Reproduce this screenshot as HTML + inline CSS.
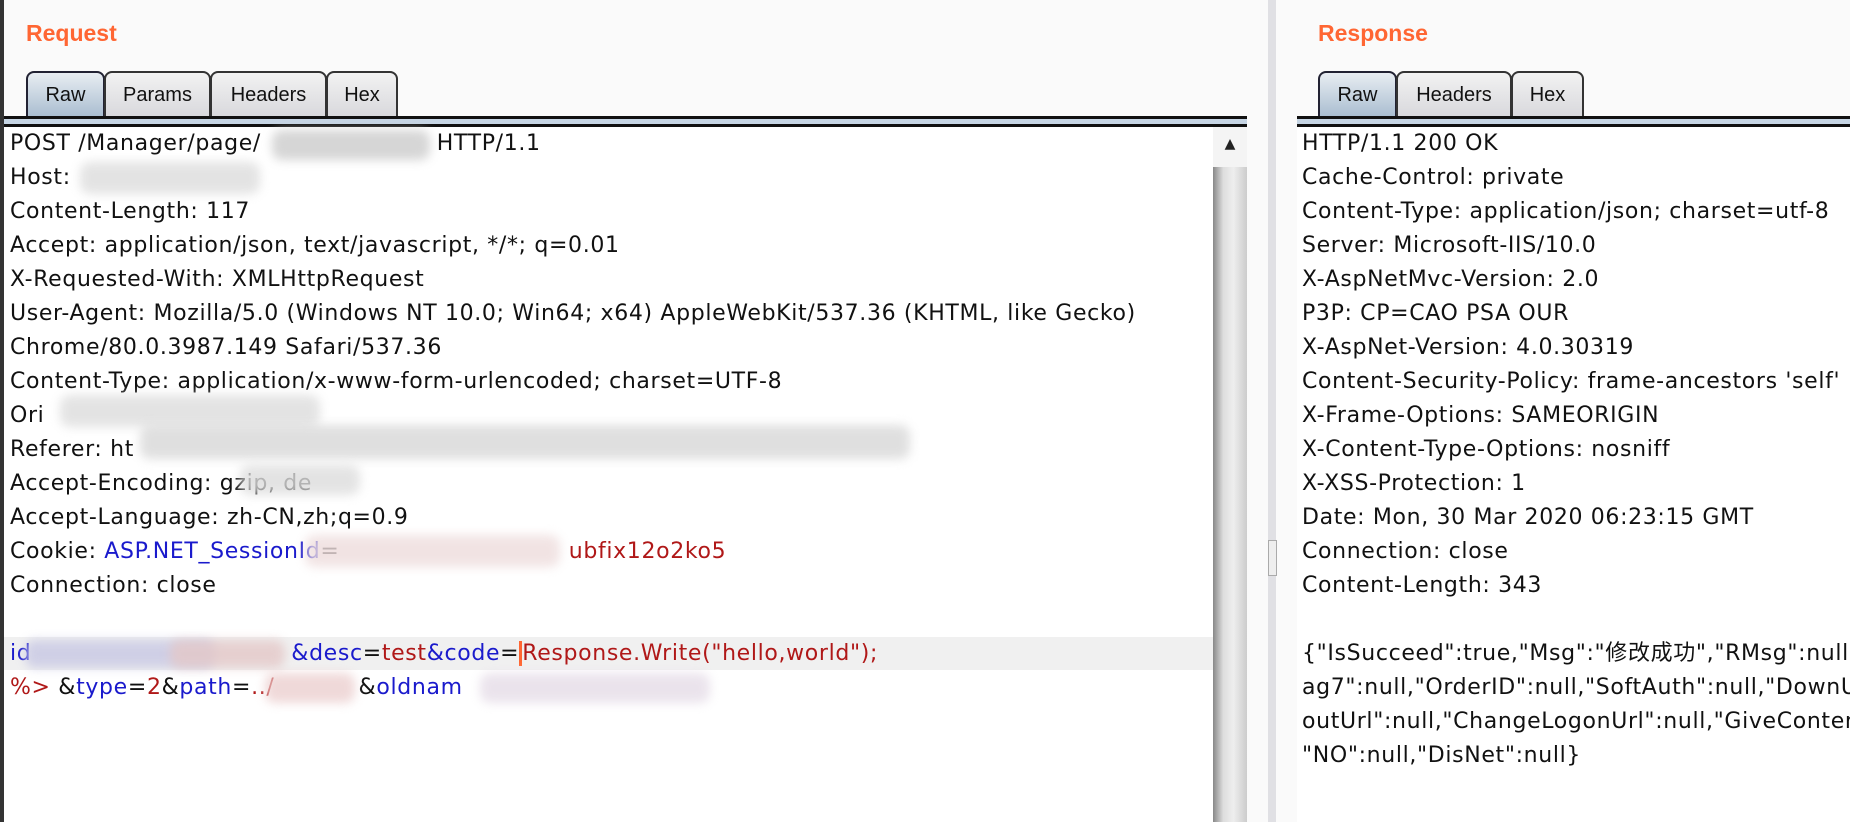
<!DOCTYPE html>
<html><head><meta charset="utf-8"><style>
*{margin:0;padding:0;box-sizing:border-box}
body{width:1850px;height:822px;background:#fafafa;position:relative;overflow:hidden;font-family:"DejaVu Sans","Liberation Sans","Noto Sans CJK SC",sans-serif}
.edge{position:absolute;left:0;top:0;width:4px;height:822px;background:#333}
.title{position:absolute;top:20px;font:bold 23px "Liberation Sans",sans-serif;color:#ff6633}
.tabs{position:absolute;top:71px;height:46px}
.tab{position:absolute;top:0;height:46px;border:2px solid #333;border-bottom:none;border-radius:8px 8px 0 0;background:linear-gradient(#f2f2f2,#d8d8dc);font:20px "Liberation Sans",sans-serif;color:#111;text-align:center;line-height:44px}
.tab.sel{background:linear-gradient(#e8edf2,#a9bdd0);border-color:#223}
.bar{position:absolute;top:116px;height:11px;background:#c6d5e4;border-top:3px solid #111;border-bottom:3px solid #111}
.panel{position:absolute;top:127px;bottom:0;background:#fff}
.txt{position:absolute;font-size:22px;letter-spacing:0.65px;line-height:34px;white-space:pre;color:#111}
.b{color:#1a1acc}.r{color:#b01818}
.blur{position:absolute;filter:blur(5px);border-radius:10px;opacity:.8}
</style></head><body>
<div class="edge"></div>
<div class="title" style="left:26px">Request</div>
<div class="tabs" style="left:26px">
<div class="tab sel" style="left:0;width:79px">Raw</div>
<div class="tab" style="left:78px;width:107px">Params</div>
<div class="tab" style="left:184px;width:117px">Headers</div>
<div class="tab" style="left:300px;width:72px">Hex</div>
</div>
<div class="bar" style="left:4px;width:1243px"></div>
<div class="panel" style="left:4px;width:1209px"></div>
<div style="position:absolute;left:4px;top:637px;width:1209px;height:33px;background:#f0f0f0"></div>
<div style="position:absolute;left:1213px;top:127px;width:34px;height:695px;background:linear-gradient(90deg,#888,#ddd 30%,#eee 60%,#ccc)"></div>
<div style="position:absolute;left:1213px;top:127px;width:34px;height:40px;background:#f4f4f4;font-size:14px;text-align:center;line-height:34px;color:#222">▲</div>
<div style="position:absolute;left:1268px;top:0;width:8px;height:822px;background:#e0e0e4"></div>
<div style="position:absolute;left:1268px;top:540px;width:9px;height:36px;border:1px solid #aaa;background:#eee"></div>
<div class="txt" style="left:10px;top:127px">POST /Manager/page/                       HTTP/1.1
Host: 
Content-Length: 117
Accept: application/json, text/javascript, */*; q=0.01
X-Requested-With: XMLHttpRequest
User-Agent: Mozilla/5.0 (Windows NT 10.0; Win64; x64) AppleWebKit/537.36 (KHTML, like Gecko)
Chrome/80.0.3987.149 Safari/537.36
Content-Type: application/x-www-form-urlencoded; charset=UTF-8
Ori
Referer: ht
Accept-Encoding: gzip, de
Accept-Language: zh-CN,zh;q=0.9
Cookie: <span class="b">ASP.NET_SessionId</span>=<span class="r">                              ubfix12o2ko5</span>
Connection: close

<span class="b">id</span>                                  <span class="b">&amp;desc</span>=<span class="r">test</span><span class="b">&amp;code</span>=<span style="border-left:3px solid #ff6633" class="r">Response.Write("hello,world");</span>
<span class="r">%&gt;</span> &amp;<span class="b">type</span>=<span class="r">2</span>&amp;<span class="b">path</span>=<span class="r">../</span>           &amp;<span class="b">oldnam</span></div>
<div class="blur" style="left:272px;top:130px;width:158px;height:30px;background:#ccc"></div>
<div class="blur" style="left:80px;top:162px;width:180px;height:32px;background:#ddd"></div>
<div class="blur" style="left:60px;top:395px;width:260px;height:32px;background:#ddd"></div>
<div class="blur" style="left:140px;top:425px;width:770px;height:34px;background:#d8d8d8"></div>
<div class="blur" style="left:240px;top:465px;width:120px;height:30px;background:#ddd"></div>
<div class="blur" style="left:305px;top:535px;width:255px;height:32px;background:#eedddd"></div>
<div class="blur" style="left:25px;top:640px;width:190px;height:28px;background:#c8c8e4"></div>
<div class="blur" style="left:170px;top:640px;width:115px;height:28px;background:#e4c8c8"></div>
<div class="blur" style="left:265px;top:673px;width:90px;height:30px;background:#ecd0d0"></div>
<div class="blur" style="left:480px;top:673px;width:230px;height:30px;background:#e6dde8"></div>
<div class="title" style="left:1318px">Response</div>
<div class="tabs" style="left:1318px">
<div class="tab sel" style="left:0;width:79px">Raw</div>
<div class="tab" style="left:78px;width:116px">Headers</div>
<div class="tab" style="left:193px;width:73px">Hex</div>
</div>
<div class="bar" style="left:1297px;width:553px"></div>
<div class="panel" style="left:1297px;width:553px"></div>
<div class="txt" style="left:1302px;top:127px">HTTP/1.1 200 OK
Cache-Control: private
Content-Type: application/json; charset=utf-8
Server: Microsoft-IIS/10.0
X-AspNetMvc-Version: 2.0
P3P: CP=CAO PSA OUR
X-AspNet-Version: 4.0.30319
Content-Security-Policy: frame-ancestors 'self'
X-Frame-Options: SAMEORIGIN
X-Content-Type-Options: nosniff
X-XSS-Protection: 1
Date: Mon, 30 Mar 2020 06:23:15 GMT
Connection: close
Content-Length: 343

{"IsSucceed":true,"Msg":"修改成功","RMsg":null,"
ag7":null,"OrderID":null,"SoftAuth":null,"DownUrl
outUrl":null,"ChangeLogonUrl":null,"GiveContent
"NO":null,"DisNet":null}</div>
</body></html>
